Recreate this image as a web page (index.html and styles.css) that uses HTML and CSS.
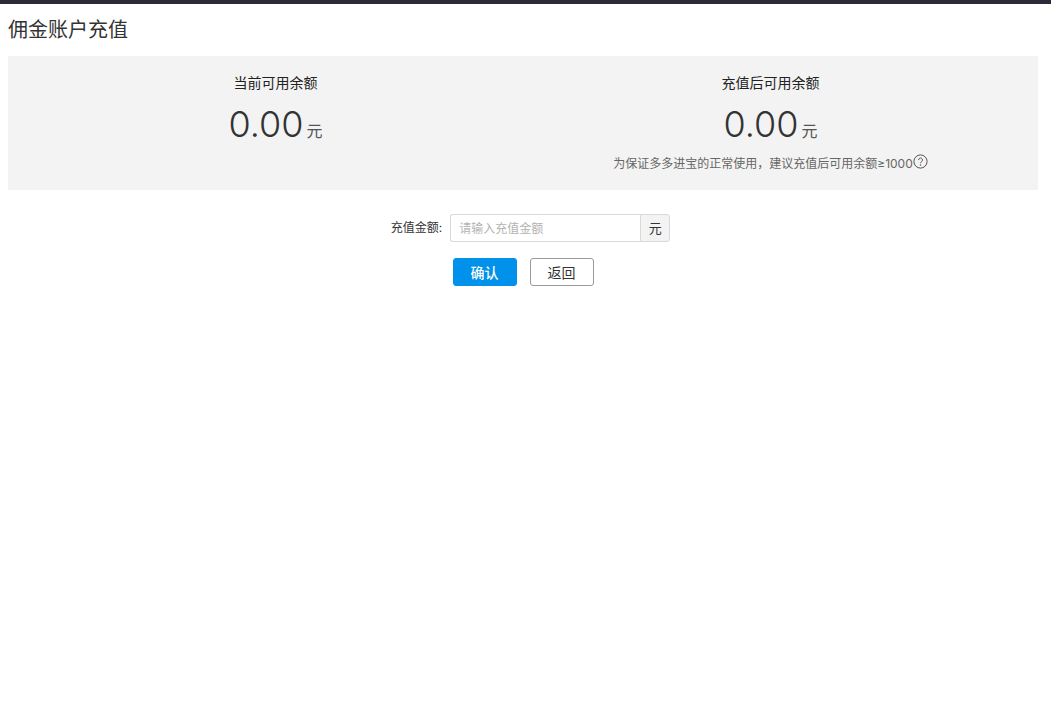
FILE: index.html
```html
<!DOCTYPE html>
<html lang="zh-CN">
<head>
<meta charset="utf-8">
<title>佣金账户充值</title>
<link rel="stylesheet" href="styles.css">
</head>
<body>
<div class="topbar"></div>
<main class="page">
  <h1 class="title">佣金账户充值</h1>
  <section class="summary">
    <div class="col">
      <div class="col-label">当前可用余额</div>
      <div class="amount"><span class="num">0.00</span><span class="unit">元</span></div>
    </div>
    <div class="col">
      <div class="col-label">充值后可用余额</div>
      <div class="amount"><span class="num">0.00</span><span class="unit">元</span></div>
      <div class="hint">为保证多多进宝的正常使用，建议充值后可用余额≥1000<svg class="help" viewBox="0 0 15 15" width="15" height="15" aria-hidden="true"><circle cx="7.5" cy="7.5" r="6.6" fill="none" stroke="#555" stroke-width="1"/><path d="M5.6 6a1.95 1.95 0 1 1 3 1.6c-.7.5-1.1.8-1.1 1.6" fill="none" stroke="#555" stroke-width="1"/><circle cx="7.5" cy="11" r=".7" fill="#555"/></svg></div>
    </div>
  </section>
  <form class="form">
    <div class="field">
      <label class="field-label">充值金额:</label>
      <div class="input-group">
        <input class="input" type="text" placeholder="请输入充值金额">
        <span class="addon">元</span>
      </div>
    </div>
    <div class="actions">
      <button class="btn primary" type="button">确认</button>
      <button class="btn" type="button">返回</button>
    </div>
  </form>
</main>
</body>
</html>
```
FILE: styles.css
```css
* { box-sizing: border-box; }
html, body { margin: 0; padding: 0; background: #fff; }
body {
  height: 701px;
  overflow: hidden;
  font-family: Inter, "Noto Sans CJK SC", sans-serif;
  color: #333;
}
.topbar { height: 4px; background: #2a2a38; }
.page { padding: 0 13px 0 8px; }
.title {
  margin: 0;
  height: 52px;
  font-size: 20px;
  font-weight: 400;
  line-height: 52px;
  color: #333;
}
.summary {
  display: grid;
  grid-template-columns: 1fr 1fr;
  height: 134px;
  padding: 0 20px;
  background: #f3f3f3;
}
.col { text-align: center; padding-top: 17px; }
.col-label { font-size: 14px; line-height: 20px; color: #222; }
.amount { height: 48px; line-height: 46px; margin-top: 8px; }
.num { font-size: 36px; font-weight: 300; color: #333; }
.unit { font-size: 16px; margin-left: 3px; color: #555; }
.hint {
  display: flex;
  justify-content: center;
  align-items: center;
  height: 18px;
  margin-top: 4px;
  font-size: 12px;
  color: #666;
}
.help { margin-top: -1px; }
.form { padding-top: 24px; }
.field { display: flex; justify-content: center; align-items: center; height: 28px; padding-left: 15px; }
.field-label { font-size: 12px; color: #333; margin-right: 8px; margin-top: -3px; }
.input-group { display: flex; width: 220px; height: 28px; }
.input {
  flex: 1;
  min-width: 0;
  height: 28px;
  padding: 0 8px;
  border: 1px solid #d9d9d9;
  border-right: 0;
  border-radius: 3px 0 0 3px;
  font: 12px Inter, "Noto Sans CJK SC", sans-serif;
  outline: none;
}
.input::placeholder { color: #b3b3b3; opacity: 1; }
.addon {
  width: 30px;
  line-height: 27px;
  text-align: center;
  font-size: 13px;
  color: #333;
  background: #f3f3f3;
  border: 1px solid #d9d9d9;
  border-radius: 0 3px 3px 0;
}
.actions { display: flex; justify-content: center; gap: 13px; margin-top: 16px; padding-left: 1px; }
.btn {
  width: 64px;
  height: 28px;
  padding: 0 1px 1px 0;
  background: #fff;
  border: 1px solid #999;
  border-radius: 3px;
  font: 14px Inter, "Noto Sans CJK SC", sans-serif;
  color: #333;
}
.btn.primary { background: #0091ea; border-color: #0091ea; color: #fff; font-weight: 500; }
```
